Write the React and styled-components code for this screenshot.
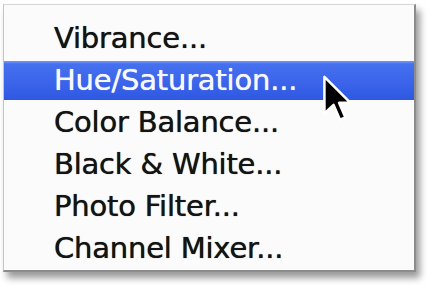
import styled, { createGlobalStyle } from 'styled-components';

const GlobalStyle = createGlobalStyle`
  html, body {
    margin: 0;
    padding: 0;
    background: #ffffff;
  }
  body {
    width: 434px;
    height: 291px;
    overflow: hidden;
  }
`;

const Page = styled.div`
  position: relative;
  width: 434px;
  height: 291px;
  padding: 4px 0 0 3px;
  box-sizing: border-box;
`;

const Menu = styled.ul`
  list-style: none;
  margin: 0;
  width: 413px;
  box-sizing: border-box;
  padding: 12px 0 1px;
  background: #fbfbfb;
  border-top: 1px solid #d6d6d6;
  border-left: 1px solid #c4c4c4;
  border-right: 2px solid #8c8c8c;
  border-bottom: 2px solid #8c8c8c;
  box-shadow: 4px 6px 7px rgba(0, 0, 0, 0.4);
`;

const Item = styled.li`
  height: 42px;
  display: flex;
  align-items: center;
  padding-left: 50px;
  font-family: "DejaVu Sans", "Liberation Sans", sans-serif;
  font-size: 29px;
  letter-spacing: -0.2px;
  color: ${p => (p.$active ? '#f6f8ff' : '#141414')};
  background: ${p =>
    p.$active
      ? 'linear-gradient(#7a98f4, #4570ee 8%, #3a63ea 60%, #2f58e2) center / 100% 39px no-repeat'
      : 'transparent'};
  text-shadow: ${p => (p.$active ? '0 0 0.7px #ffffff' : '0 0 0.7px #141414')};
`;

const Cursor = styled.svg`
  position: absolute;
  left: 321px;
  top: 73px;
  width: 32px;
  height: 51px;
`;

const items = [
  'Vibrance...',
  'Hue/Saturation...',
  'Color Balance...',
  'Black & White...',
  'Photo Filter...',
  'Channel Mixer...',
];

export default function App() {
  return (
    <>
      <GlobalStyle />
      <Page>
        <Menu>
          {items.map((label, i) => (
            <Item key={label} $active={i === 1}>{label}</Item>
          ))}
        </Menu>
        <Cursor viewBox="-1.5 -1.5 14 22">
          <path
            d="M0 0 L0 16 L4 12.3 L6.8 18.8 L9.2 17.8 L6.4 11.4 L11.4 11.4 Z"
            fill="#000"
            stroke="#fff"
            strokeWidth="1.1"
            strokeLinejoin="round"
          />
        </Cursor>
      </Page>
    </>
  );
}
